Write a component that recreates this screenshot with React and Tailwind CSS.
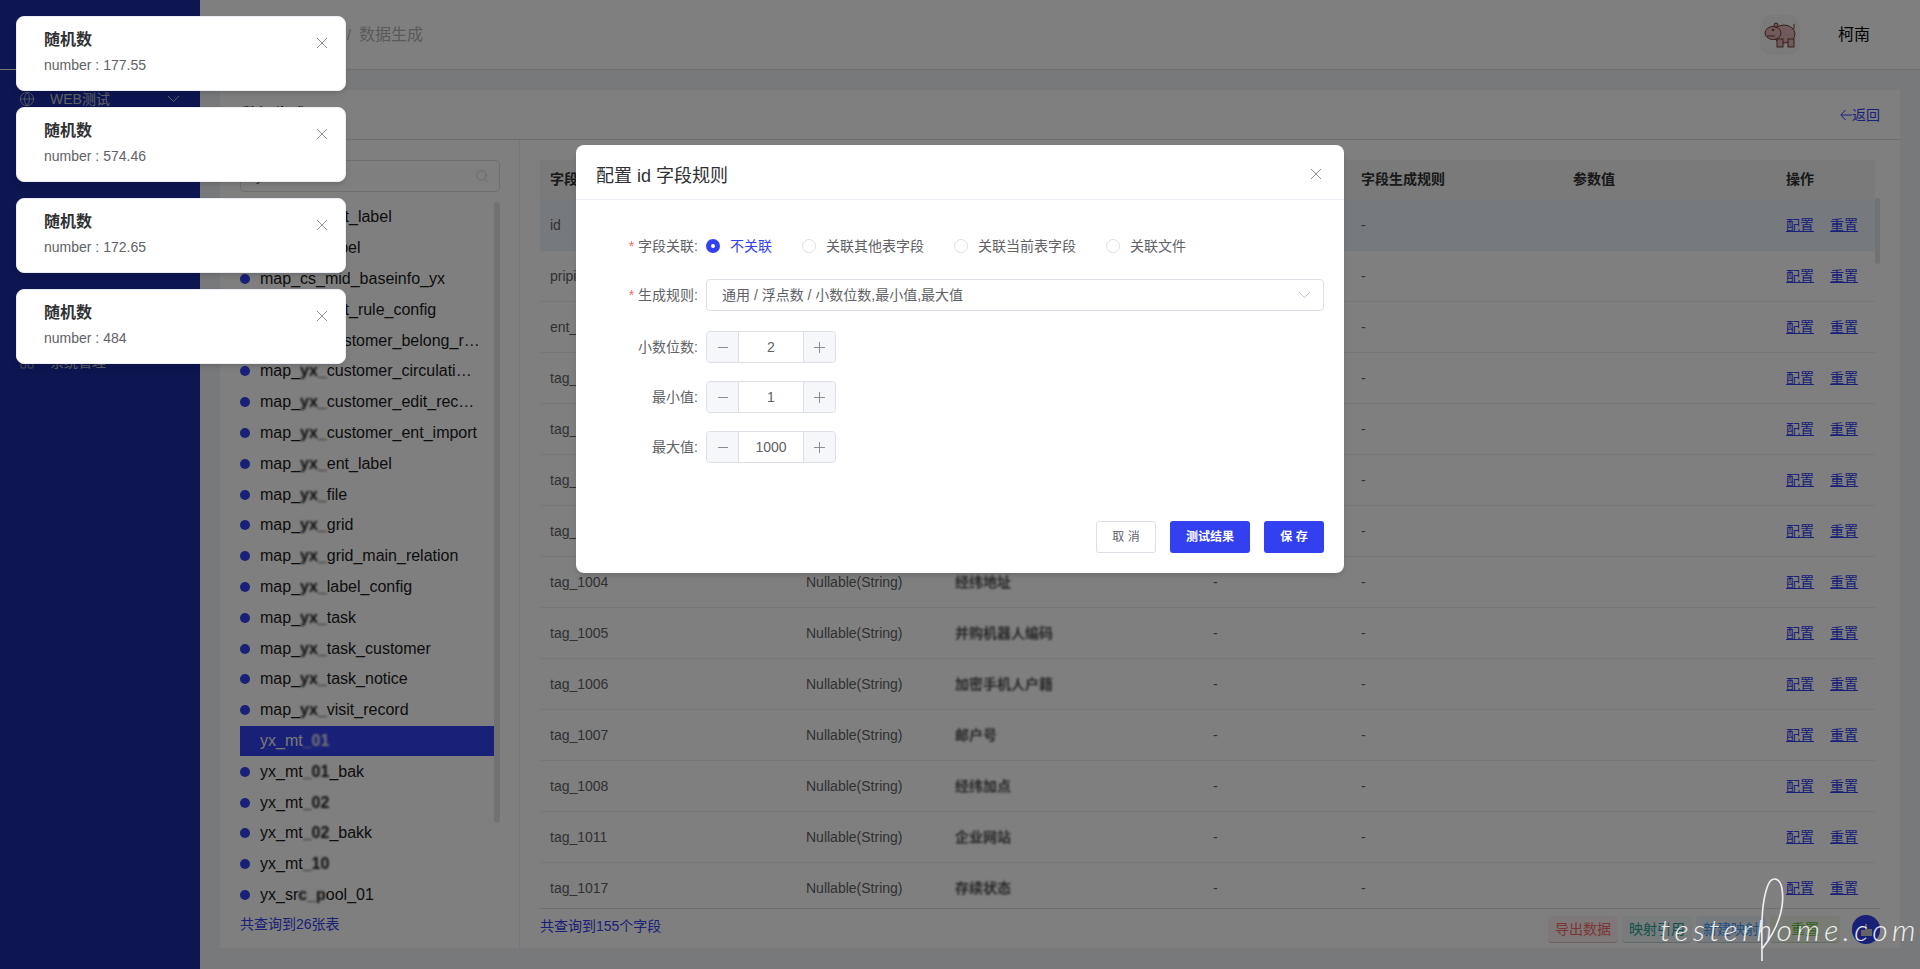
import { Globe, LayoutGrid, Search } from "lucide-react";

const toasts = ["177.55", "574.46", "172.65", "484"];

const tables = [
  ["map_", "yx_", "ent_label"],
  ["map_", "yx_", "label"],
  ["map_cs_mid_baseinfo_yx"],
  ["map_", "yx_", "opt_rule_config"],
  ["map_", "yx_", "customer_belong_record"],
  ["map_", "yx_", "customer_circulation_record"],
  ["map_", "yx_", "customer_edit_record"],
  ["map_", "yx_", "customer_ent_import"],
  ["map_", "yx_", "ent_label"],
  ["map_", "yx_", "file"],
  ["map_", "yx_", "grid"],
  ["map_", "yx_", "grid_main_relation"],
  ["map_", "yx_", "label_config"],
  ["map_", "yx_", "task"],
  ["map_", "yx_", "task_customer"],
  ["map_", "yx_", "task_notice"],
  ["map_", "yx_", "visit_record"],
  ["yx_mt", "_01", ""],
  ["yx_mt", "_01", "_bak"],
  ["yx_mt", "_02", ""],
  ["yx_mt", "_02", "_bakk"],
  ["yx_mt", "_10", ""],
  ["yx_sr", "c_p", "ool_01"],
];

const fields = [
  ["id", "Int64", "主键"],
  ["pripid", "Nullable(String)", "主体身份"],
  ["ent_name", "Nullable(String)", "企业名称"],
  ["tag_1000", "Nullable(String)", "统一代码"],
  ["tag_1001", "Nullable(String)", "注册地址"],
  ["tag_1002", "Nullable(String)", "注册资本"],
  ["tag_1003", "Nullable(String)", "成立日期"],
  ["tag_1004", "Nullable(String)", "经纬地址"],
  ["tag_1005", "Nullable(String)", "并购机器人编码"],
  ["tag_1006", "Nullable(String)", "加密手机人户籍"],
  ["tag_1007", "Nullable(String)", "邮户号"],
  ["tag_1008", "Nullable(String)", "经纬加点"],
  ["tag_1011", "Nullable(String)", "企业网站"],
  ["tag_1017", "Nullable(String)", "存续状态"],
  ["tag_1018", "Nullable(String)", "存续状态"],
];

const CloseIcon = ({ className }) => (
  <svg width="12" height="12" viewBox="0 0 12 12" className={className} fill="none" stroke="currentColor" strokeWidth="1">
    <path d="M1 1l10 10M11 1L1 11" />
  </svg>
);

const Chevron = ({ className }) => (
  <svg width="13" height="8" viewBox="0 0 13 8" className={className} fill="none" stroke="currentColor" strokeWidth="1">
    <path d="M1 1l5.5 5.5L12 1" />
  </svg>
);

const Hippo = () => (
  <svg width="34" height="30" viewBox="0 0 34 30" stroke="#6e3f2c" strokeWidth="1">
    <ellipse cx="21" cy="14" rx="11" ry="9" fill="#e3b4b8" />
    <rect x="14" y="19" width="6" height="8" fill="#e3b4b8" />
    <rect x="25" y="19" width="6" height="8" fill="#e3b4b8" />
    <ellipse cx="10" cy="13" rx="8" ry="6.5" fill="#e3b4b8" />
    <circle cx="13" cy="5" r="2" fill="#e3b4b8" />
    <path d="M31 4v5" fill="none" />
    <path d="M4 16h8" fill="none" />
    <circle cx="10" cy="10" r="0.8" fill="#3a2018" />
  </svg>
);

const NumberBox = ({ value }) => (
  <div className="flex h-8 w-[130px] rounded border border-[#dcdfe6] text-sm text-[#606266]">
    <div className="flex w-8 items-center justify-center rounded-l bg-[#f5f7fa] border-r border-[#dcdfe6]">
      <span className="h-px w-[10px] bg-[#8a8d93]" />
    </div>
    <div className="flex flex-1 items-center justify-center">{value}</div>
    <div className="relative flex w-8 items-center justify-center rounded-r bg-[#f5f7fa] border-l border-[#dcdfe6]">
      <svg width="11" height="11" viewBox="0 0 11 11" stroke="#8a8d93" strokeWidth="1">
        <path d="M5.5 0v11M0 5.5h11" />
      </svg>
    </div>
  </div>
);

const FormRow = ({ label, required, className, children }) => (
  <div className={`flex items-center ${className}`}>
    <div className="mr-2 w-[102px] shrink-0 text-right text-sm text-[#606266]">
      {required && <span className="mr-1 text-[#f56c6c]">*</span>}
      {label}:
    </div>
    {children}
  </div>
);

const Radio = ({ label, checked }) => (
  <div className="mr-[30px] flex items-center text-sm">
    {checked ? (
      <span className="flex h-[14px] w-[14px] items-center justify-center rounded-full bg-[#3340f0]">
        <span className="h-1 w-1 rounded-full bg-white" />
      </span>
    ) : (
      <span className="h-[14px] w-[14px] rounded-full border border-[#dcdfe6]" />
    )}
    <span className={`ml-[10px] ${checked ? "text-[#3340f0]" : "text-[#606266]"}`}>{label}</span>
  </div>
);

const App = () => {
  return (
    <div className="relative flex h-[969px] w-full overflow-hidden bg-[#f0f2f5] [font-family:'Liberation_Sans','Noto_Sans_CJK_SC',sans-serif]">
      {/* sidebar */}
      <aside className="w-[200px] shrink-0 bg-[#1c2ca4] text-sm text-[#c0c4cc]">
        <div className="h-[70px] border-b border-[#f0f0f0]" />
        <div className="flex h-[58px] items-center pl-[19px] pr-5">
          <Globe size={16} strokeWidth={1.2} />
          <span className="ml-[15px] flex-1">WEB测试</span>
          <Chevron />
        </div>
        <div className="mt-[205px] flex h-[58px] items-center pl-[19px]">
          <LayoutGrid size={16} strokeWidth={1.2} />
          <span className="ml-[15px]">系统管理</span>
        </div>
      </aside>

      <div className="flex min-w-0 flex-1 flex-col">
        {/* top bar */}
        <header className="flex h-[70px] items-center border-b border-[#dcdfe6] bg-white">
          <div className="ml-[147px] text-base text-[#b4b4b4]">
            <span className="mr-[8px] text-sm">/</span>
            数据生成
          </div>
          <div className="ml-auto mr-[50px] flex items-center">
            <div className="flex h-10 w-10 items-center justify-center rounded-xl bg-[#f7f7f7]">
              <Hippo />
            </div>
            <span className="ml-[38px] text-base text-black">柯南</span>
          </div>
        </header>

        {/* panel */}
        <main className="mx-5 mt-5 mb-[21px] flex min-h-0 flex-1 flex-col bg-white">
          <div className="flex h-[50px] shrink-0 items-center justify-between border-b border-[#dcdfe6] pl-[22px] pr-5">
            <span className="text-base font-bold text-[#303133]">数据生成</span>
            <span className="flex items-center text-sm text-[#3340f0]">
              <svg width="12" height="12" viewBox="0 0 12 12" fill="none" stroke="currentColor" strokeWidth="1">
                <path d="M5.5 1L.8 6l4.7 5M1 6h11" />
              </svg>
              返回
            </span>
          </div>

          <div className="flex min-h-0 flex-1">
            {/* table list */}
            <div className="flex w-[300px] shrink-0 flex-col border-r border-[#ebeef5] pl-5 pr-[19px] pt-5">
              <div className="flex h-8 items-center rounded border border-[#dcdfe6] pl-[15px] pr-[10px] text-sm text-[#606266]">
                <span className="flex-1">yx</span>
                <Search size={14} strokeWidth={1.2} className="text-[#c0c4cc]" />
              </div>
              <div className="relative mt-[10px] h-[709px] overflow-hidden">
                {tables.map((t, i) => {
                  const active = i === 17;
                  return (
                    <div
                      key={i}
                      className={`flex h-[30.8px] w-[254px] items-center text-base ${active ? "bg-[#3340f0] text-[#f0f0f0]" : "text-[#1a1a1a]"}`}
                    >
                      <span className={`ml-0 h-[10px] w-[10px] shrink-0 rounded-full ${active ? "" : "bg-[#3340f0]"}`} />
                      <span className="ml-[10px] truncate pr-[14px]">
                        {t[0]}
                        {t[1] && <span className="font-bold blur-[1.2px]">{t[1]}</span>}
                        {t[2]}
                      </span>
                    </div>
                  );
                })}
                <div className="absolute right-0 top-0 h-[621px] w-[6px] rounded bg-[#e3e4e6]" />
              </div>
              <div className="mt-[3px] text-sm leading-[20px] text-[#3340f0]">共查询到26张表</div>
            </div>

            {/* fields */}
            <div className="flex min-w-0 flex-1 flex-col pl-5 pr-5 pt-5">
              <div className="relative h-[749px] overflow-hidden border-b border-[#dcdfe6] pr-[5px] text-sm text-[#606266]">
                <div className="flex h-10 items-center bg-[#f5f5f5] pb-[2px] font-bold text-[#303133]">
                  <div className="w-[256px] pl-[10px]">字段名称</div>
                  <div className="w-[149px] pl-[10px]">字段类型</div>
                  <div className="w-[258px] pl-[10px]">字段注释</div>
                  <div className="w-[148px] pl-[10px]">字段值</div>
                  <div className="w-[212px] pl-[10px]">字段生成规则</div>
                  <div className="w-[213px] pl-[10px]">参数值</div>
                  <div className="pl-[10px]">操作</div>
                </div>
                {fields.map((f, i) => (
                  <div
                    key={f[0]}
                    className={`flex h-[51px] items-center border-b border-[#ebeef5] pb-px ${i === 0 ? "bg-[#ecf5ff]" : ""}`}
                  >
                    <div className="w-[256px] pl-[10px]">{f[0]}</div>
                    <div className="w-[149px] pl-[10px]">{f[1]}</div>
                    <div className="w-[258px] pl-[10px]">
                      <span className="font-bold text-[#505050] blur-[1.3px]">{f[2]}</span>
                    </div>
                    <div className="w-[148px] pl-[10px]">-</div>
                    <div className="w-[212px] pl-[10px]">-</div>
                    <div className="w-[213px] pl-[10px]" />
                    <div className="flex gap-4 pl-[10px] text-[#3340f0]">
                      <span className="underline">配置</span>
                      <span className="underline">重置</span>
                    </div>
                  </div>
                ))}
                <div className="absolute right-0 top-[38px] h-[66px] w-[5px] rounded bg-[#e3e4e6]" />
              </div>
              <div className="mt-[6px] flex items-center justify-between text-sm">
                <span className="mb-[7px] text-[#3340f0]">共查询到155个字段</span>
                <div className="flex items-center">
                  <button className="mr-1 h-[27px] w-[70px] rounded-sm border-b border-[#d8c0c0] bg-[#fef0f0] text-[#f56c6c]">导出数据</button>
                  <button className="mr-1 h-[27px] w-[70px] rounded-sm border-b border-[#c0d0d0] bg-[#f0f9f8] text-[#2aa198]">映射引用</button>
                  <button className="mr-1 h-[27px] w-[70px] rounded-sm border-b border-[#c0d0d8] bg-[#ecf5ff] text-[#409eff]">新建映射</button>
                  <button className="h-[27px] w-[70px] rounded-sm border-b border-[#c8d8c0] bg-[#f0f9eb] text-[#67c23a]">重置</button>
                  <div className="ml-3 flex h-[29px] w-[28px] items-center justify-center rounded-full bg-[#3340f0] text-[#c8c8c8]">
                    <svg width="14" height="14" viewBox="0 0 14 14" fill="currentColor">
                      <path d="M6 1h2v5h5v7H2V7h4z" />
                    </svg>
                  </div>
                </div>
              </div>
            </div>
          </div>
        </main>
      </div>

      {/* modal */}
      <div className="absolute inset-0 flex items-start justify-center bg-black/50 pt-[145px]">
        <div className="flex h-[428px] w-[768px] flex-col rounded-lg bg-white shadow-md">
          <div className="flex h-[55px] shrink-0 items-center justify-between border-b border-[#ebeef5] pl-5 pr-[22px]">
            <span className="mt-[8px] text-lg text-[#303133]">配置 id 字段规则</span>
            <CloseIcon className="mt-[3px] text-[#909399]" />
          </div>
          <div className="flex flex-1 flex-col pl-5 pr-5 pt-[30px]">
            <FormRow label="字段关联" required className="mb-[17px] h-8">
              <Radio label="不关联" checked />
              <Radio label="关联其他表字段" />
              <Radio label="关联当前表字段" />
              <Radio label="关联文件" />
            </FormRow>
            <FormRow label="生成规则" required className="mb-[20px] h-8">
              <div className="flex h-8 flex-1 items-center justify-between rounded border border-[#dcdfe6] pl-[15px] pr-3 text-sm text-[#606266]">
                <span>通用 / 浮点数 / 小数位数,最小值,最大值</span>
                <Chevron className="text-[#c0c4cc]" />
              </div>
            </FormRow>
            <FormRow label="小数位数" className="mb-[18px] h-8">
              <NumberBox value="2" />
            </FormRow>
            <FormRow label="最小值" className="mb-[18px] h-8">
              <NumberBox value="1" />
            </FormRow>
            <FormRow label="最大值" className="h-8">
              <NumberBox value="1000" />
            </FormRow>
            <div className="mt-auto mb-5 flex justify-end gap-[14px] text-xs">
              <button className="h-8 w-[60px] rounded-[3px] border border-[#dcdfe6] text-[#606266]">取 消</button>
              <button className="h-8 w-[80px] rounded-[3px] bg-[#3340f0] font-bold text-white">测试结果</button>
              <button className="h-8 w-[60px] rounded-[3px] bg-[#3340f0] font-bold text-white">保 存</button>
            </div>
          </div>
        </div>
      </div>

      {/* notifications */}
      <div className="absolute left-4 top-4 flex w-[330px] flex-col gap-4">
        {toasts.map((n, i) => (
          <div key={i} className="relative h-[75px] rounded-lg border border-[#ebeef5] bg-white pl-[27px] pt-[12px] shadow-md">
            <div className="text-base font-bold leading-[22px] text-[#303133]">随机数</div>
            <div className="mt-[4px] text-sm leading-5 text-[#606266]">number : {n}</div>
            <CloseIcon className="absolute right-[17px] top-[20px] text-[#909399]" />
          </div>
        ))}
      </div>

      {/* watermark */}
      <div className="absolute bottom-[25px] left-[1660px] whitespace-nowrap text-[30px] font-light italic leading-none tracking-[4.5px] text-white/90 [font-family:Lato,sans-serif]">
        testerhome.com
      </div>
      <svg className="absolute left-[1750px] top-[875px]" width="50" height="90" viewBox="0 0 50 90" fill="none" stroke="#f0f0f0" strokeWidth="1.6">
        <path d="M12 86C12 60 10 30 18 10c4-9 12-8 14 4 3 18-4 40-20 60" />
      </svg>
    </div>
  );
};

export default App;
